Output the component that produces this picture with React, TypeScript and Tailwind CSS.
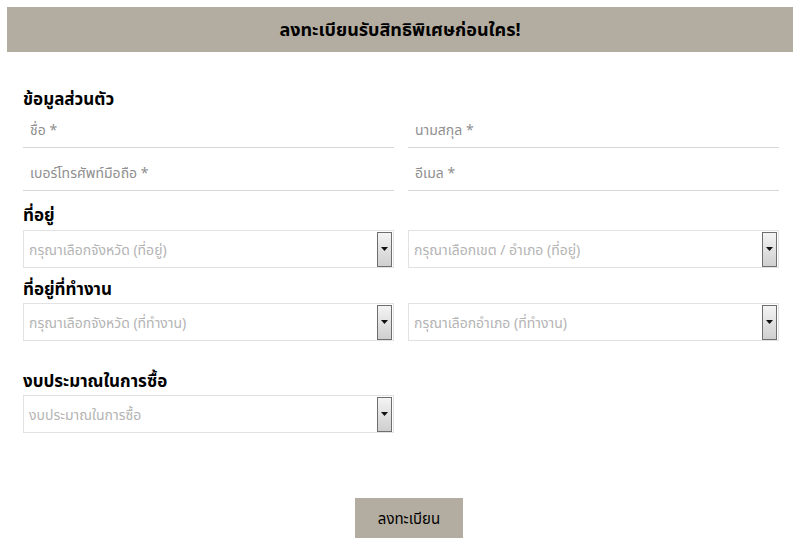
import React from "react";

const font = { fontFamily: '"Noto Sans", "Noto Sans Thai", "Noto Sans CJK SC", sans-serif' };

function LineInput({ placeholder }: { placeholder: string }) {
  return (
    <div className="h-[37px] border-b border-[#d6d6d6] flex items-center pl-[7px] pt-[1px]">
      <span className="text-[14px] text-[#8f8f8f]">{placeholder}</span>
    </div>
  );
}

function Select({ placeholder }: { placeholder: string }) {
  return (
    <div className="h-[38px] border border-[#e2e2e2] bg-white flex items-center justify-between pl-[5px] pr-[1px]">
      <span className="text-[14px] text-[#b4b4b4]">{placeholder}</span>
      <div className="w-[15px] h-[35px] border border-[#6e6e6e] bg-gradient-to-b from-[#f4f4f4] to-[#cfcfcf] flex items-center justify-center">
        <svg width="7" height="4" viewBox="0 0 7 4">
          <polygon points="0,0 7,0 3.5,4" fill="#111" />
        </svg>
      </div>
    </div>
  );
}

function Heading({ children, className = "" }: { children: React.ReactNode; className?: string }) {
  return <div className={"h-[24px] flex items-center text-[17px] font-bold text-black " + className}>{children}</div>;
}

export default function App() {
  return (
    <div className="w-[800px] h-[547px] bg-white pt-[7px]" style={font}>
      <div className="mx-[7px] h-[45px] bg-[#b3ada1] flex items-center justify-center">
        <span className="text-[18px] font-bold text-black">ลงทะเบียนรับสิทธิพิเศษก่อนใคร!</span>
      </div>
      <div className="pl-[23px] pr-[21px]">
        <Heading className="mt-[35px]">ข้อมูลส่วนตัว</Heading>
        <div className="grid grid-cols-2 gap-x-[14px]">
          <LineInput placeholder="ชื่อ *" />
          <LineInput placeholder="นามสกุล *" />
          <div className="mt-[6px]"><LineInput placeholder="เบอร์โทรศัพท์มือถือ *" /></div>
          <div className="mt-[6px]"><LineInput placeholder="อีเมล *" /></div>
        </div>
        <Heading className="mt-[12px]">ที่อยู่</Heading>
        <div className="grid grid-cols-2 gap-x-[14px] mt-[3px]">
          <Select placeholder="กรุณาเลือกจังหวัด (ที่อยู่)" />
          <Select placeholder="กรุณาเลือกเขต / อำเภอ (ที่อยู่)" />
        </div>
        <Heading className="mt-[9px]">ที่อยู่ที่ทำงาน</Heading>
        <div className="grid grid-cols-2 gap-x-[14px] mt-[2px]">
          <Select placeholder="กรุณาเลือกจังหวัด (ที่ทำงาน)" />
          <Select placeholder="กรุณาเลือกอำเภอ (ที่ทำงาน)" />
        </div>
        <Heading className="mt-[28px]">งบประมาณในการซื้อ</Heading>
        <div className="grid grid-cols-2 gap-x-[14px] mt-[2px]">
          <Select placeholder="งบประมาณในการซื้อ" />
        </div>
      </div>
      <div className="flex justify-center mt-[65px] pl-[18px]">
        <button className="w-[108px] h-[40px] bg-[#b3ada1] text-[15px] text-black">ลงทะเบียน</button>
      </div>
    </div>
  );
}
